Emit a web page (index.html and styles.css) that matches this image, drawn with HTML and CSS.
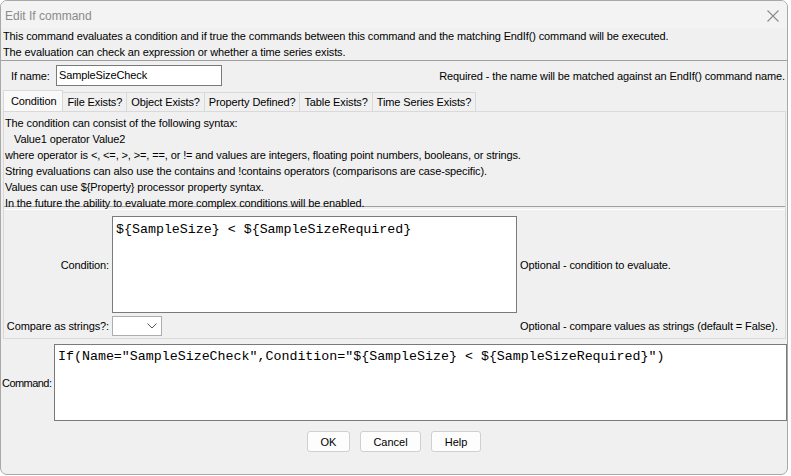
FILE: index.html
```html
<!DOCTYPE html>
<html>
<head>
<meta charset="utf-8">
<link rel="stylesheet" href="styles.css">
</head>
<body>
<div class="window">
  <div class="titlebar">
    <span class="title">Edit If command</span>
    <svg class="close" width="12" height="12" viewBox="0 0 12 12"><path d="M0.5 0.5L11.5 11.5M11.5 0.5L0.5 11.5" stroke="#8c8c8c" stroke-width="1.1" fill="none"/></svg>
  </div>
  <div class="desc">
    <div>This command evaluates a condition and if true the commands between this command and the matching EndIf() command will be executed.</div>
    <div>The evaluation can check an expression or whether a time series exists.</div>
  </div>
  <div class="sep"></div>
  <div class="name-row">
    <span class="name-label">If name:</span>
    <div class="field name-field">SampleSizeCheck</div>
    <span class="name-note">Required - the name will be matched against an EndIf() command name.</span>
  </div>
  <div class="tabs">
    <div class="tab active">Condition</div>
    <div class="tab">File Exists?</div>
    <div class="tab">Object Exists?</div>
    <div class="tab">Property Defined?</div>
    <div class="tab">Table Exists?</div>
    <div class="tab">Time Series Exists?</div>
  </div>
  <div class="panel">
    <div class="info">
      <div>The condition can consist of the following syntax:</div>
      <div class="indent">Value1 operator Value2</div>
      <div>where operator is &lt;, &lt;=, &gt;, &gt;=, ==, or != and values are integers, floating point numbers, booleans, or strings.</div>
      <div>String evaluations can also use the contains and !contains operators (comparisons are case-specific).</div>
      <div>Values can use ${Property} processor property syntax.</div>
      <div>In the future the ability to evaluate more complex conditions will be enabled.</div>
    </div>
    <div class="form">
      <span class="flabel">Condition:</span>
      <div class="area cond-area">${SampleSize} &lt; ${SampleSizeRequired}</div>
      <span class="fnote">Optional - condition to evaluate.</span>
      <span class="flabel">Compare as strings?:</span>
      <div class="combo-cell"><div class="combo"><svg width="10" height="6" viewBox="0 0 10 6"><path d="M0.5 0.5L5 5L9.5 0.5" stroke="#555" stroke-width="1" fill="none"/></svg></div></div>
      <span class="fnote">Optional - compare values as strings (default = False).</span>
    </div>
  </div>
  <div class="cmd-row">
    <span class="cmd-label">Command:</span>
    <div class="area cmd-area">If(Name="SampleSizeCheck",Condition="${SampleSize} &lt; ${SampleSizeRequired}")</div>
  </div>
  <div class="buttons">
    <button class="btn ok">OK</button>
    <button class="btn cancel">Cancel</button>
    <button class="btn help">Help</button>
  </div>
</div>
</body>
</html>
```

FILE: styles.css
```css
html, body {
  margin: 0;
  padding: 0;
}
body {
  width: 791px;
  height: 476px;
  background: #ffffff;
  font-family: "Liberation Sans", Arial, sans-serif;
  font-size: 11px;
  letter-spacing: -0.12px;
  color: #000;
  overflow: hidden;
}
.window {
  box-sizing: border-box;
  width: 788px;
  height: 475px;
  background: #f0f0f0;
  border: 1px solid #a8a8a8;
  border-radius: 7px;
  overflow: hidden;
}
.titlebar {
  height: 27px;
  display: flex;
  align-items: center;
  justify-content: space-between;
  padding: 2px 8px 0 4px;
  box-sizing: border-box;
  background: #f3f3f3;
}
.title {
  color: #8a8a8a;
  font-size: 12px;
  letter-spacing: 0;
}
.close {
  display: block;
}
.desc {
  padding-left: 2px;
  line-height: 16px;
}
.sep {
  height: 1px;
  background: #a0a0a0;
}
.name-row {
  display: flex;
  align-items: center;
  height: 21px;
  margin-top: 4px;
}
.name-label {
  margin-left: 10px;
  width: 45px;
}
.field {
  box-sizing: border-box;
  background: #fff;
  border: 1px solid #7a7a7a;
}
.name-field {
  width: 166px;
  height: 21px;
  line-height: 19px;
  padding-left: 2px;
}
.name-note {
  margin-left: auto;
  margin-right: 2px;
}
.tabs {
  display: flex;
  margin-top: 4px;
  padding-left: 2px;
  height: 21px;
  align-items: flex-end;
}
.tab {
  box-sizing: border-box;
  height: 19px;
  line-height: 18px;
  padding: 0 4px;
  border: 1px solid #d9d9d9;
  border-bottom: none;
  border-left: none;
  background: #f0f0f0;
}
.tab.active {
  height: 21px;
  line-height: 20px;
  padding: 0 6px 0 7px;
  background: #f9f9f9;
  border-left: 1px solid #d9d9d9;
}
.panel {
  box-sizing: border-box;
  margin: 0 0 0 2px;
  width: 783px;
  height: 228px;
  border: 1px solid #d9d9d9;
  background: #f0f0f0;
}
.info {
  box-sizing: border-box;
  height: 95px;
  line-height: 16px;
  padding: 3px 0 0 1px;
  border-bottom: 1px solid #a0a0a0;
}
.indent {
  padding-left: 9px;
}
.form {
  display: grid;
  grid-template-columns: 108px 406px auto;
  row-gap: 3px;
  align-items: center;
  margin-top: 2px;
  border-top: 1px solid #ffffff;
  padding-top: 6px;
}
.flabel {
  text-align: right;
  padding-right: 3px;
  white-space: nowrap;
}
.area {
  box-sizing: border-box;
  background: #fff;
  border: 1px solid #7a7a7a;
  font-family: "Liberation Mono", "Courier New", monospace;
  font-size: 13.3px;
  letter-spacing: 0;
  white-space: pre;
  padding: 5px 3px;
}
.cond-area {
  width: 405px;
  height: 97px;
}
.fnote {
  padding-left: 2px;
  white-space: nowrap;
}
.combo {
  box-sizing: border-box;
  width: 50px;
  height: 20px;
  background: #fff;
  border: 1px solid #adadad;
  display: flex;
  align-items: center;
  justify-content: flex-end;
  padding-right: 4px;
}
.cmd-row {
  display: flex;
  align-items: center;
  margin-top: 5px;
}
.cmd-label {
  width: 53px;
  padding-left: 1px;
  box-sizing: border-box;
  font-size: 11px;
  letter-spacing: -0.55px;
}
.cmd-area {
  width: 733px;
  height: 77px;
  padding: 4px 3px;
}
.buttons {
  display: flex;
  justify-content: center;
  gap: 10px;
  margin-top: 10px;
}
.btn {
  box-sizing: border-box;
  height: 21px;
  background: #fdfdfd;
  border: 1px solid #d0d0d0;
  border-radius: 3px;
  font-family: "Liberation Sans", Arial, sans-serif;
  font-size: 11px;
  color: #000;
  padding: 0;
}
.ok { width: 43px; }
.cancel { width: 61px; }
.help { width: 50px; }
```
